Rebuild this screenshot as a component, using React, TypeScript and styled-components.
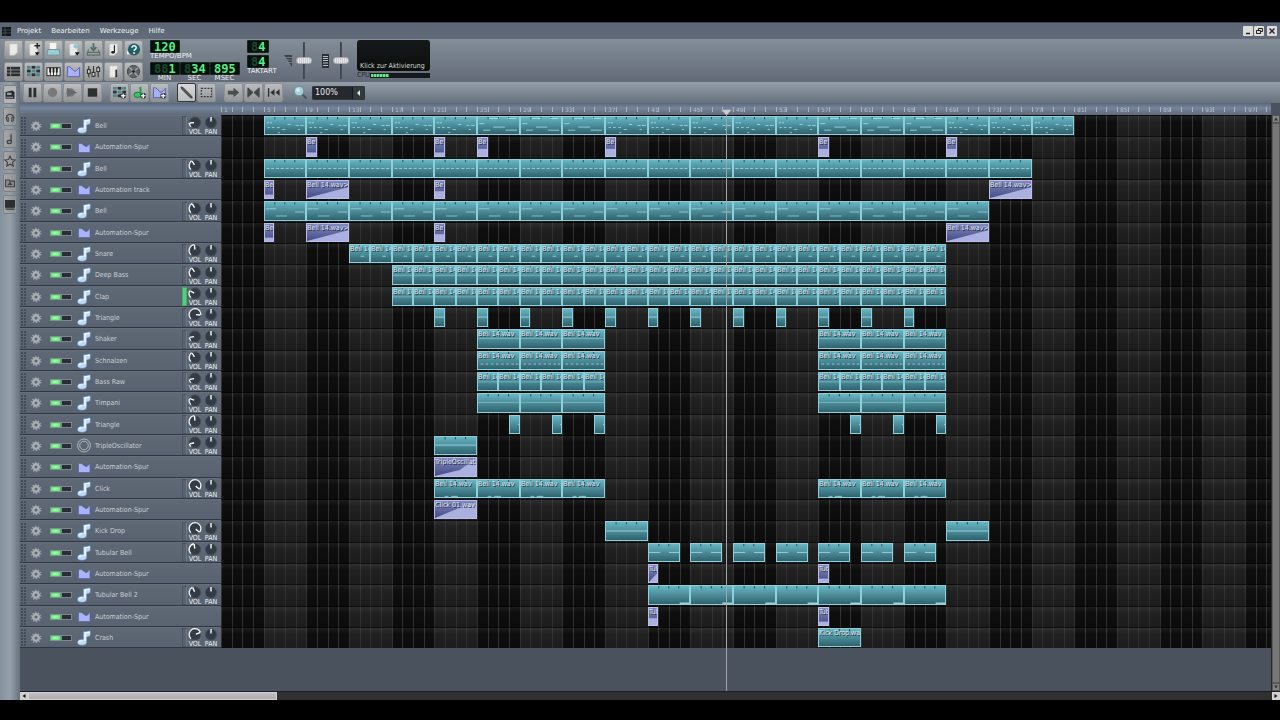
import React from "react";
import styled, { createGlobalStyle, css } from "styled-components";

const GlobalStyle = createGlobalStyle`
  * { box-sizing: border-box; }
  body {
    margin: 0;
    background: #000;
    color: #dfe4ea;
    font: 7px/8px "DejaVu Sans", "Liberation Sans", sans-serif;
  }
  button, input, select { margin: 0; padding: 0; border: 0; font: inherit; color: inherit; background: none; }
  svg { display: block; flex: none; }
`;

const condensed = css`
  font-family: "DejaVu Sans Condensed", "DejaVu Sans", "Liberation Sans", sans-serif;
`;

/* ---------- shell ---------- */

const Page = styled.div`
  min-height: 100vh;
  padding: 22px 0 20px;
  display: flex;
  flex-direction: column;
  background: #000;
`;

const Window = styled.main`
  flex: 1;
  display: flex;
  flex-direction: column;
  background: #6b7683;
`;

const MenuBar = styled.header`
  height: 17px;
  display: flex;
  align-items: center;
  padding: 0 3px 0 2px;
  border-top: 1px solid #3f4753;
  background: linear-gradient(#5c6575, #626b79);
`;

const Menu = styled.nav`
  flex: 1;
  display: flex;
  gap: 10px;
  padding-left: 6px;
`;

const MenuItem = styled.button`
  color: #eef1f4;
  line-height: 10px;
`;

const WindowButtons = styled.div`
  display: flex;
  gap: 1px;
`;

const WindowButton = styled.button<{ $apart?: boolean }>`
  width: 10px;
  height: 10px;
  margin-left: ${(p) => (p.$apart ? 2 : 0)}px;
  border-radius: 1px;
  background: #dcdcda;
`;

const TopBar = styled.section`
  height: 43px;
  display: flex;
  padding: 1px 4px 0;
  background: linear-gradient(#838e98, #626a77);
`;

const ButtonGrid = styled.div`
  display: grid;
  grid-template-columns: repeat(7, 19px);
  grid-auto-rows: 20px;
  gap: 2px 1px;
`;

const ToolButton = styled.button<{ $active?: boolean }>`
  width: 19px;
  height: 19px;
  display: grid;
  place-items: center;
  border: 1px solid ${(p) => (p.$active ? "#33363a" : "#8e9295")};
  border-radius: 2px;
  background: ${(p) => (p.$active ? "linear-gradient(#d8d8d8, #bcbcbc)" : "linear-gradient(#bcbdbe, #929495)")};
`;

const Clock = styled.div`
  display: grid;
  grid-template-columns: repeat(3, 29px);
  gap: 1px;
  align-content: start;
  margin-left: 7px;
`;

const Meter = styled.div`
  display: flex;
  flex-direction: column;
  height: 21px;
  color: #eceff2;
  line-height: 7px;
  text-align: center;
  white-space: nowrap;
`;

const TempoMeter = styled(Meter)`
  grid-column: 1 / -1;
  text-align: left;
`;

const Signature = styled.div`
  width: 28px;
  margin-left: 8px;
  display: flex;
  flex-direction: column;
  color: #eceff2;
  line-height: 7px;
`;

const LcdBox = styled.output`
  align-self: flex-start;
  height: 13px;
  padding: 0 3px;
  border: 1px solid #1c2420;
  border-radius: 1px;
  background: #04100a;
  font: bold 12px/12px "DejaVu Sans Mono", "Liberation Mono", monospace;
  color: #55f08c;
  ${Signature} &:not(:first-child) { margin-top: 2px; }
`;

const LcdGhost = styled.span`
  color: #1a4a2e;
`;

const SliderGroup = styled.label`
  display: flex;
  align-items: center;
  gap: 3px;
  height: 41px;
`;

const VerticalSlider = styled.input`
  appearance: none;
  writing-mode: vertical-lr;
  direction: rtl;
  width: 16px;
  height: 37px;
  background: linear-gradient(90deg, transparent 7px, #3c424b 7px, #4a515b 9px, transparent 9px);
  &::-webkit-slider-thumb {
    appearance: none;
    width: 16px;
    height: 7px;
    border: 1px solid #a8abae;
    border-radius: 3px;
    background: repeating-linear-gradient(90deg, #c9cacb 0 1px, #e8e8e8 1px 2px);
  }
`;

const Visual = styled.div`
  display: flex;
  flex-direction: column;
  width: 73px;
  margin-left: 8px;
`;

const Scope = styled.button`
  height: 31px;
  display: flex;
  align-items: flex-end;
  padding: 0 0 1px 3px;
  border-radius: 3px;
  background: linear-gradient(#16191a, #0a0e0c);
  color: #d6dbd8;
  white-space: nowrap;
  ${condensed}
`;

const Cpu = styled.label`
  display: flex;
  align-items: center;
  height: 8px;
  color: #23282e;
  ${condensed}
`;

const CpuBar = styled.span`
  flex: 1;
  height: 5px;
  border: 1px solid #14171a;
  background: repeating-linear-gradient(90deg, #66e888 0 2px, #2c9c50 2px 3px) 0 0 / 18px 3px no-repeat #16191c;
`;

const Body = styled.div`
  flex: 1;
  display: flex;
`;

const SideBar = styled.aside`
  width: 20px;
  flex: none;
  display: flex;
  flex-direction: column;
  gap: 3px;
  padding: 3px;
  background: linear-gradient(90deg, #84909b, #95a0aa 10px, #66717e);
`;

const SideTab = styled.button<{ $active?: boolean }>`
  height: 19px;
  display: grid;
  place-items: center;
  border: 1px solid #7c8082;
  border-radius: 2px;
  background: ${(p) => (p.$active ? "#b4b5b6" : "linear-gradient(90deg, #a6a7a8, #8f9192)")};
`;

const Editor = styled.section`
  flex: 1;
  min-width: 0;
  display: flex;
  flex-direction: column;
  background: #4a525d;
`;

const EditorBar = styled.div`
  height: 21px;
  display: flex;
  align-items: center;
  padding-left: 3px;
  gap: 8px;
  background: linear-gradient(#949ea9, #67717e);
`;

const Cluster = styled.div`
  display: flex;
  gap: 1px;
`;

const Zoom = styled.label`
  display: flex;
  align-items: center;
  gap: 4px;
  padding-left: 2px;
`;

const ZoomBox = styled.span`
  position: relative;
  display: block;
  width: 53px;
  height: 14px;
  border: 1px solid #30353b;
  border-radius: 1px;
  background: linear-gradient(90deg, #25292e 39px, #111417 39px, #111417 40px, #34393f 40px);
  & > svg { position: absolute; right: 3px; top: 3px; pointer-events: none; }
`;

const ZoomSelect = styled.select`
  appearance: none;
  width: 51px;
  height: 12px;
  padding-left: 2px;
  font: 8px/12px "DejaVu Sans", "Liberation Sans", sans-serif;
  color: #e8eaec;
`;

const Scroller = styled.div`
  flex: 1;
  display: flex;
`;

const Arrangement = styled.div`
  position: relative;
  flex: 1;
  min-width: 0;
  overflow: hidden;
`;

const RulerRow = styled.div`
  height: 12px;
  padding-left: 201px;
  background: linear-gradient(#59677d, #76859b 5px, #5f697a);
`;

const Ruler = styled.div`
  position: relative;
  height: 12px;
  overflow: hidden;
  background: linear-gradient(90deg, #a9b2bd 1px, transparent 1px 11px, #a9b2bd 11px 12px, transparent 12px 21px, #a9b2bd 21px 22px, transparent 22px) 0 4px / 32px 5px repeat-x;
`;

const BarNumber = styled.span`
  position: absolute;
  top: 3px;
  padding: 0 1px;
  font-size: 6px;
  line-height: 8px;
  color: #b4bcc7;
`;

const Playhead = styled.div`
  position: absolute;
  top: 6px;
  bottom: 0;
  width: 13px;
  &::after {
    content: "";
    position: absolute;
    left: 6px;
    top: 5px;
    bottom: 0;
    width: 1px;
    background: #a3a6a9;
  }
`;

const TrackRow = styled.div`
  display: flex;
  height: 21px;
  &:nth-child(3n + 2) { height: 22px; }
`;

const TrackHead = styled.div`
  width: 201px;
  flex: none;
  display: flex;
  align-items: center;
  padding-right: 2px;
  border-top: 1px solid #66707d;
  border-bottom: 1px solid #303742;
  background: linear-gradient(#5f6976, #586270);
`;

const Grip = styled.span`
  width: 5px;
  height: 17px;
  margin: 0 4px 0 1px;
  background: radial-gradient(circle at 1px 1px, #424b57 1px, transparent 1px) 0 0 / 3px 3px;
`;

const IconButton = styled.button`
  width: 12px;
  height: 12px;
  margin-right: 8px;
`;

const Led = styled.input`
  appearance: none;
  width: 11px;
  height: 6px;
  border: 1px solid #7d868f;
  background: #2a2d31;
  &:checked {
    background: radial-gradient(ellipse, #b0ffb4, #52d66e);
    border-color: #6f9c80;
  }
`;

const TrackName = styled.button`
  flex: 1;
  height: 17px;
  margin-left: 5px;
  display: flex;
  align-items: center;
  gap: 4px;
  text-align: left;
  color: #c9cfd6;
  white-space: nowrap;
  ${condensed}
`;

const Activity = styled.span<{ $lit?: boolean }>`
  width: 5px;
  height: 19px;
  border: 1px solid ${(p) => (p.$lit ? "#3fae63" : "#49525e")};
  border-right-color: ${(p) => (p.$lit ? "#3fae63" : "#707a86")};
  background: ${(p) => (p.$lit ? "#54cf7b" : "#5a6471")};
`;

const KnobLabel = styled.label`
  position: relative;
  width: 16px;
  display: flex;
  flex-direction: column;
  align-items: center;
  line-height: 6px;
  color: #f0f2f4;
  ${condensed}
`;

const KnobInput = styled.input`
  position: absolute;
  inset: 0 0 6px;
  width: 16px;
  height: 13px;
  opacity: 0;
`;

const Lane = styled.div`
  position: relative;
  flex: 1;
  min-width: 0;
  overflow: hidden;
  background:
    linear-gradient(rgba(0,0,0,.6) 1px, rgba(255,255,255,.06) 1px, rgba(255,255,255,0) 7px, rgba(0,0,0,.15) 20px),
    linear-gradient(90deg, #343434 1px, transparent 1px 11px, #343434 11px 12px, transparent 12px 21px, #343434 21px 22px, transparent 22px) 0 0 / 32px 100%,
    linear-gradient(90deg, #0e0e0e 43px, #212121 43px 85px, #0e0e0e 85px 128px, #212121 128px 171px, #0e0e0e 171px 213px, #212121 213px) 0 0 / 256px 100%;
`;

const ClipBox = styled.div<{ $auto?: boolean }>`
  position: absolute;
  top: 1px;
  bottom: 1px;
  overflow: hidden;
  border: 1px solid ${(p) => (p.$auto ? "#b9bfe6" : "#8ed0da")};
  background: ${(p) => (p.$auto ? "linear-gradient(#7f88c0, #434c84)" : "linear-gradient(#68b6c4, #2f626e)")};
  & > svg { position: absolute; inset: 0; width: 100%; height: 100%; }
`;

const ClipName = styled.span`
  position: relative;
  display: block;
  white-space: nowrap;
  color: #e2e8f2;
  text-shadow: 1px 1px 0 #1a2a33;
  ${condensed}
`;

const VScroll = styled.div`
  width: 9px;
  flex: none;
  margin-top: 12px;
  display: flex;
  flex-direction: column;
  border-left: 1px solid #26292d;
  background: #747474;
`;

const HScroll = styled.div`
  height: 9px;
  display: flex;
  border-top: 1px solid #1c1f23;
  background: #303030;
`;

const ScrollButton = styled.button<{ $light?: boolean }>`
  width: 8px;
  height: 8px;
  display: grid;
  place-items: center;
  border: 1px solid ${(p) => (p.$light ? "#d2d2d2" : "#555")};
  background: ${(p) => (p.$light ? "#cfcfcf" : "#858585")};
`;

const VThumb = styled.div`
  flex: 1;
  border: 1px solid #5b5b5b;
  background: #777;
`;

const HTrack = styled.div`
  flex: 1;
`;

const HThumb = styled.div`
  width: 20%;
  height: 8px;
  border: 1px solid #d2d0d2;
  background: linear-gradient(#c2c0c2, #aeacae);
`;

/* ---------- icons ---------- */

const Svg = ({ size = 15, children }: { size?: number; children: React.ReactNode }) => (
  <svg width={size} height={size} viewBox="0 0 16 16" fill="none" aria-hidden="true">{children}</svg>
);

const sheet = <path d="M4 2h8v9l-3 3H4z" fill="#ebebe9" stroke="#c9c9c6" strokeWidth=".6" />;
const down = <path d="M9.5 11h5L12 14.5z" fill="#111" />;
const blocks = (
  <g>
    {[1, 6, 11].map((x) => [2, 6, 10].map((y, i) => (
      <rect key={`${x}-${y}`} x={x} y={y} width="4" height="3" fill={(x + i) % 2 ? "#4b878d" : "#2b3236"} />
    )))}
  </g>
);
const plus = <path d="M12 8.5v6M9 11.5h6" stroke="#20262a" strokeWidth="3.4" />;
const plusTop = <path d="M12 9v5M9.5 11.5h5" stroke="#e8ece9" strokeWidth="1.6" />;
const curve = <path d="M1.5 3H4l5 4.5h1.5l4-4v10h-13z" fill="#a9b1f6" stroke="#5660b0" strokeWidth="1" />;

const mainIcons: [string, React.ReactNode][] = [
  ["Neu", sheet],
  ["Neu aus Vorlage", <>{sheet}<path d="M12 1v6M9 4h6" stroke="#222" strokeWidth="1.5" />{down}</>],
  ["Öffnen", <><path d="M4 1h7v7H4z" fill="#f4f4f2" /><path d="M2 8h12l1 6H1z" fill="#9ccbd2" stroke="#5a8f98" strokeWidth=".8" /></>],
  ["Zuletzt geöffnet", <>{sheet}<circle cx="10.5" cy="4.5" r="2.5" fill="#8cc9d4" />{down}</>],
  ["Speichern", <><path d="M8 1v6M5 5.5L8 9l3-3.5" stroke="#4c6c66" strokeWidth="1.8" /><path d="M3 8l-1.5 3v3h13v-3L13 8M2 11h12" stroke="#5d6e6a" strokeWidth="1.2" /></>],
  ["Exportieren", <>{sheet}<path d="M9 3.5V11" stroke="#222" strokeWidth="1.2" /><ellipse cx="7.5" cy="11" rx="2" ry="1.5" fill="#222" /></>],
  ["Hilfe anzeigen", <><circle cx="8.5" cy="8" r="6.5" fill="#1f6068" /><path d="M6.3 6.2c0-3 4.700-2.800 4.600-.1 0 1.700-2.300 1.700-2.300 3.500M8.600 11v1.700" stroke="#f1f5f5" strokeWidth="1.7" /><path d="M1 9l3 4H1z" fill="#fff" /></>],
  ["Song-Editor", <g><rect x="1" y="3" width="14" height="10" fill="#2a2c2e" /><path d="M1 6.300h14M1 9.700h14M5 3v10" stroke="#8b8e90" /></g>],
  ["Beat+Bassline-Editor", blocks],
  ["Piano-Roll", <g><rect x="1" y="4" width="14" height="8.5" fill="#f1f1ef" stroke="#222" /><path d="M4.500 4v8.500M8 4v8.500M11.500 4v8.500" stroke="#222" strokeWidth="1" /><path d="M4.500 4v5M8 4v5M11.500 4v5" stroke="#222" strokeWidth="2" /></g>],
  ["Automation-Editor", curve],
  ["FX-Mixer", <g stroke="#333" strokeWidth="1.2"><path d="M3 2v12M8 2v12M13 2v12" /><rect x="1.5" y="6" width="3" height="4" fill="#ddd" /><rect x="6.5" y="9" width="3" height="4" fill="#ddd" /><rect x="11.5" y="4" width="3" height="4" fill="#ddd" /></g>],
  ["Projektnotizen", <>{sheet}<path d="M11 6v8" stroke="#333" strokeWidth="2" /></>],
  ["Controller-Rack", <><circle cx="8" cy="8" r="6.5" fill="#606669" stroke="#3a3e40" /><path d="M8 8L3.500 3.500M8 8l5-4M8 8l4.500 5M8 8l-5 4" stroke="#a4a8aa" strokeWidth="1.3" /><circle cx="8" cy="8" r="1.5" fill="#222" /></>],
];

const sideIcons: [string, React.ReactNode][] = [
  ["Instrumente", <><path d="M2 4l9-2 3 2v9H2z" fill="#252c2e" /><path d="M4 5h6v3H4z" fill="#8fa09b" /><path d="M3 11h9" stroke="#c7cdcb" /></>],
  ["Samples", <><path d="M4 12C-1 2 17 2 12 12" stroke="#3f4346" strokeWidth="1.8" /><path d="M3 8.500h3V14H4zM13 8.500h-3V14h2z" fill="#77797b" stroke="#3f4346" /></>],
  ["Presets", <><path d="M9.500 1.500V12" stroke="#3f4346" strokeWidth="1.8" /><ellipse cx="7" cy="12" rx="3" ry="2.2" fill="#8b8d8f" stroke="#3f4346" strokeWidth="1.4" /></>],
  ["Favoriten", <path d="M8 1.500l2 4.500 5 .5-3.700 3.300 1.100 5L8 12.200l-4.400 2.600 1.100-5L1 6.500 6 6z" stroke="#3f4346" strokeWidth="1.5" />],
  ["Eigene Dateien", <path d="M2 4h5l1 1.500h6V13H2zM6 10l2-2.500 2 2.500z" fill="#8a8d8f" stroke="#3a3e41" strokeWidth="1.4" />],
  ["Computer", <><rect x="2" y="2" width="12" height="9" fill="#2b3033" stroke="#1a1e20" /><path d="M2 12.500h12v2H2z" fill="#44494b" /></>],
];

const EighthNote = () => (
  <svg width="14" height="16" viewBox="0 0 14 15" aria-hidden="true">
    <path d="M6.300 1.300L13.500.3v4.200l-1.300 1.500-2.400.4v5c0 2.200-2 3.400-4.900 3.400-3 0-4.700-1.200-4.600-3.100.2-2.100 2.600-3.400 6-2.900z" fill="#bcdaf8" stroke="#4f76a4" strokeWidth=".5" />
    <path d="M8 2v8.500M8 2.400l4.700-.7M2 11.500c.6-1 2-1.400 3.500-1.400" fill="none" stroke="#f6fbff" strokeWidth="1.3" />
  </svg>
);
const Envelope = () => (
  <svg width="14" height="13" viewBox="0 0 14 13" aria-hidden="true">
    <path d="M1.500 2.500h3l4 3H10l3-3v9H1.500z" fill="#a9b3f8" stroke="#59639e" strokeWidth=".7" />
  </svg>
);
const Oscillator = () => (
  <svg width="14" height="15" viewBox="0 0 14 15" fill="none" stroke="#c3cad1" aria-hidden="true">
    <circle cx="7" cy="7.5" r="6.5" strokeWidth=".8" /><circle cx="7" cy="7.5" r="4.3" strokeWidth=".8" />
  </svg>
);
const Gear = () => (
  <svg width="12" height="12" viewBox="0 0 13 13" fill="none" aria-hidden="true">
    <circle cx="6.5" cy="6.5" r="5" stroke="#9aa1a8" strokeWidth="1.5" strokeDasharray="1.5 1.64" />
    <circle cx="6.5" cy="6.5" r="3" stroke="#a9afb4" strokeWidth="2.6" />
  </svg>
);

const polar = (r: number, deg: number) => {
  const a = ((deg - 90) * Math.PI) / 180;
  return `${(8 + r * Math.cos(a)).toFixed(2)} ${(7 + r * Math.sin(a)).toFixed(2)}`;
};

const Knob = ({ label, angle, arc }: { label: string; angle: number; arc?: boolean }) => (
  <KnobLabel>
    <svg width="16" height="13" viewBox="0 0 16 14" fill="none" aria-hidden="true">
      <circle cx="8" cy="7" r="6" fill="#353b44" stroke="#464e59" />
      {arc && <path d={`M${polar(6.3, -135)}A6.3 6.3 0 ${angle > 45 ? 1 : 0} 1 ${polar(6.3, angle)}`} stroke="#f1f3f5" strokeWidth="1.4" />}
      <path d={`M${polar(1, angle)}L${polar(5.8, angle)}`} stroke="#fff" strokeWidth="1.5" />
    </svg>
    <KnobInput type="range" min={-135} max={135} defaultValue={angle} />
    {label}
  </KnobLabel>
);

/* ---------- song data ---------- */

type Pattern = "melody" | "melodyLong" | "dashes" | "shuffle" | "steps" | "line" | "soft" | "hit" | "low" | "drone" | "tubes" | "tail" | "tick" | "end" | "none";
type Shape = "flat" | "half" | "ramp" | "bend" | "steep" | "corner";
type Clip = { at: number; len: number; name?: string; pattern?: Pattern; shape?: Shape };
type Track = { name: string; kind: "note" | "auto" | "osc"; vol?: number; lit?: boolean; clips: Clip[] };

const run = (from: number, to: number, step: number, extra: Partial<Clip> = {}): Clip[] => {
  const out: Clip[] = [];
  for (let at = from; at < to; at += step) out.push({ at, len: step, ...extra });
  return out;
};
const spots = (at: number[], extra: Partial<Clip> = {}): Clip[] => at.map((a) => ({ at: a, len: 1, ...extra }));

const isLong = (at: number) => (at >= 24 && at < 36) || (at >= 56 && at < 68);
const wav = "Bell 14.wav";
/* clip titles shortened for blocks of one and two bars */
const wav1 = "Be";
const wav2 = "Bell 14";

const tracks: Track[] = [
  { name: "Bell", kind: "note", vol: -95, clips: run(4, 80, 4).map((c) => ({ ...c, pattern: isLong(c.at) ? "melodyLong" : "melody" })) },
  { name: "Automation-Spur", kind: "auto", clips: [...spots([8, 20], { name: wav1, shape: "flat" }), ...spots([24, 36, 56, 68], { name: wav1, shape: "half" })] },
  { name: "Bell", kind: "note", vol: -35, clips: run(4, 76, 4, { pattern: "dashes" }) },
  { name: "Automation track", kind: "auto", clips: [{ at: 4, len: 1, name: wav1, shape: "flat" }, { at: 8, len: 4, name: `${wav}>`, shape: "ramp" }, { at: 20, len: 1, name: wav1, shape: "half" }, { at: 72, len: 4, name: `${wav}>`, shape: "ramp" }] },
  { name: "Bell", kind: "note", vol: -30, clips: run(4, 72, 4, { pattern: "steps" }) },
  { name: "Automation-Spur", kind: "auto", clips: [{ at: 4, len: 1, name: wav1, shape: "flat" }, { at: 8, len: 4, name: `${wav}>`, shape: "ramp" }, { at: 20, len: 1, name: wav1, shape: "half" }, { at: 68, len: 4, name: `${wav}>`, shape: "ramp" }] },
  { name: "Snare", kind: "note", vol: -5, clips: run(12, 68, 2, { name: wav2, pattern: "hit" }) },
  { name: "Deep Bass", kind: "note", vol: -35, clips: run(16, 68, 2, { name: wav2, pattern: "low" }) },
  { name: "Clap", kind: "note", vol: -60, lit: true, clips: run(16, 68, 2, { name: wav2, pattern: "low" }) },
  { name: "Triangle", kind: "note", vol: 95, clips: spots([20, 24, 28, 32, 36, 40, 44, 48, 52, 56, 60, 64], { pattern: "line" }) },
  { name: "Shaker", kind: "note", vol: -100, clips: [...run(24, 36, 4, { name: wav, pattern: "soft" }), ...run(56, 68, 4, { name: wav, pattern: "soft" })] },
  { name: "Schnalzen", kind: "note", vol: -35, clips: [...run(24, 36, 4, { name: wav, pattern: "shuffle" }), ...run(56, 68, 4, { name: wav, pattern: "shuffle" })] },
  { name: "Bass Raw", kind: "note", vol: -100, clips: [...run(24, 36, 2, { name: wav2, pattern: "low" }), ...run(56, 68, 2, { name: wav2, pattern: "low" })] },
  { name: "Timpani", kind: "note", vol: -70, clips: [...run(24, 36, 4, { pattern: "soft" }), ...run(56, 68, 4, { pattern: "soft" })] },
  { name: "Triangle", kind: "note", vol: -5, clips: spots([27, 31, 35, 59, 63, 67], { pattern: "tick" }) },
  { name: "TripleOscillator", kind: "osc", vol: -105, clips: [{ at: 20, len: 4, pattern: "line" }] },
  { name: "Automation-Spur", kind: "auto", clips: [{ at: 20, len: 4, name: "TripleOscillat", shape: "bend" }] },
  { name: "Click", kind: "note", vol: 130, clips: [...run(20, 36, 4, { name: wav, pattern: "tail" }), ...run(56, 68, 4, { name: wav, pattern: "tail" })] },
  { name: "Automation-Spur", kind: "auto", clips: [{ at: 20, len: 4, name: "Click 01.wav", shape: "steep" }] },
  { name: "Kick Drop", kind: "note", vol: 130, clips: [{ at: 36, len: 4, pattern: "drone" }, { at: 68, len: 4, pattern: "drone" }] },
  { name: "Tubular Bell", kind: "note", vol: -10, clips: run(40, 68, 4, { pattern: "tubes" }).map((c) => ({ ...c, len: 3 })) },
  { name: "Automation-Spur", kind: "auto", clips: [{ at: 40, len: 1, name: "Tub", shape: "corner" }, { at: 56, len: 1, name: "Tub", shape: "flat" }] },
  { name: "Tubular Bell 2", kind: "note", vol: -25, clips: run(40, 68, 4, { pattern: "end" }) },
  { name: "Automation-Spur", kind: "auto", clips: [{ at: 40, len: 1, name: "Tub", shape: "half" }, { at: 56, len: 1, name: "Tub", shape: "flat" }] },
  { name: "Crash", kind: "note", vol: 70, clips: [{ at: 56, len: 4, name: "Kick Drop.wa", pattern: "none" }] },
];

/* note strokes as [x, y, width], in a field of 32 units per bar by 60 */
const strokes: Record<Pattern, [number, number, number][]> = {
  melody: [[5, 19, 7], [15, 19, 7], [8, 36, 8], [22, 36, 8], [38, 36, 9], [55, 43, 10], [72, 25, 10], [98, 28, 10], [112, 28, 12], [105, 43, 7], [41, 54, 7]],
  melodyLong: [[34, 4, 30], [92, 4, 26], [4, 22, 16], [48, 34, 36], [16, 45, 22], [86, 45, 36]],
  dashes: [4, 19, 35, 50, 66, 82, 98, 113].map((x) => [x, 28, 10]),
  shuffle: [8, 24, 40, 56, 72, 88, 104, 118].map((x) => [x, 41, 8]),
  steps: [[2, 20, 34], [96, 31, 30], [34, 44, 36]],
  line: [[0, 27, 128]],
  soft: [[0, 27, 128]],
  hit: [[36, 38, 12]],
  low: [[0, 30, 64]],
  drone: [[0, 27, 128]],
  tubes: [[0, 28, 36], [64, 28, 32]],
  tail: [[30, 56, 12], [50, 56, 12], [60, 56, 12]],
  tick: [[28, 28, 4]],
  end: [[98, 55, 30]],
  none: [],
};
const thick: Partial<Record<Pattern, number>> = { steps: 5, drone: 6, end: 5 };
const faint: Pattern[] = ["steps", "soft", "low", "drone"];

const shapes: Record<Shape, string> = {
  flat: "0,48 100,48 100,60 0,60",
  half: "0,36 100,36 100,60 0,60",
  ramp: "0,60 100,22 100,60",
  bend: "0,60 60,40 100,2 100,60",
  steep: "0,60 80,12 100,8 100,60",
  corner: "0,60 100,30 100,60",
};

const barX = (bar: number) => Math.round((bar * 32) / 3);

const ClipView = ({ clip, auto }: { clip: Clip; auto: boolean }) => {
  const units = clip.len * 32;
  const p = clip.pattern ?? "none";
  return (
    <ClipBox $auto={auto} style={{ left: barX(clip.at), width: barX(clip.at + clip.len) - barX(clip.at) }}>
      {auto ? (
        <svg viewBox="0 0 100 60" preserveAspectRatio="none" aria-hidden="true">
          <polygon points={shapes[clip.shape ?? "flat"]} fill="#aab0e0" />
        </svg>
      ) : (
        <svg viewBox={`0 0 ${units} 60`} preserveAspectRatio="none" aria-hidden="true">
          {Array.from({ length: clip.len - 1 }, (_, i) => (
            <rect key={i} x={(i + 1) * 32 - 2} y="0" width="3" height="8" fill="#24505b" />
          ))}
          {strokes[p].map(([x, y, w], i) => (
            <rect key={i} x={x} y={y} width={w} height={thick[p] ?? 3} fill="#b5edf4" opacity={faint.includes(p) ? 0.4 : 0.8} />
          ))}
        </svg>
      )}
      {clip.name && <ClipName>{clip.name}</ClipName>}
    </ClipBox>
  );
};

const Lcd = ({ value, cells = 3 }: { value: string; cells?: number }) => (
  <LcdBox>
    {cells > value.length && <LcdGhost aria-hidden="true">{"8".repeat(cells - value.length)}</LcdGhost>}
    {value}
  </LcdBox>
);

const Tool = ({ name, active, children }: { name: string; active?: boolean; children: React.ReactNode }) => (
  <ToolButton aria-label={name} $active={active}><Svg>{children}</Svg></ToolButton>
);

export default function App() {
  return (
    <Page>
      <GlobalStyle />
      <Window>
        <MenuBar>
          <svg width="9" height="9" viewBox="0 0 9 9" aria-hidden="true">
            <path d="M0 0h9v9H0z" fill="#15181b" /><path d="M0 3h9M0 6h9M3 0v9" stroke="#4f565f" strokeWidth=".7" />
          </svg>
          <Menu>
            {["Projekt", "Bearbeiten", "Werkzeuge", "Hilfe"].map((m) => <MenuItem key={m}>{m}</MenuItem>)}
          </Menu>
          <WindowButtons>
            <WindowButton aria-label="Minimieren"><svg width="10" height="10"><path d="M3 7.500h4" stroke="#222" strokeWidth="1.5" /></svg></WindowButton>
            <WindowButton aria-label="Wiederherstellen"><svg width="10" height="10" fill="none" stroke="#222"><path d="M4.500 4V2.500h4v3H7M2.500 4.500h4v3h-4z" /></svg></WindowButton>
            <WindowButton aria-label="Schließen" $apart><svg width="10" height="10"><path d="M2.500 2.500l5 5M7.500 2.500l-5 5" stroke="#222" strokeWidth="1.3" /></svg></WindowButton>
          </WindowButtons>
        </MenuBar>

        <TopBar>
          <ButtonGrid>
            {mainIcons.map(([name, icon]) => <Tool key={name} name={name}>{icon}</Tool>)}
          </ButtonGrid>
          <Clock>
            <TempoMeter><Lcd value="120" />TEMPO/BPM</TempoMeter>
            <Meter><Lcd value="1" />MIN</Meter>
            <Meter><Lcd value="34" />SEC</Meter>
            <Meter><Lcd value="895" />MSEC</Meter>
          </Clock>
          <Signature>
            <Lcd value="4" cells={2} />
            <Lcd value="4" cells={2} />
            TAKTART
          </Signature>
          <SliderGroup>
            <svg width="18" height="14" viewBox="0 0 18 14" aria-hidden="true"><path d="M9 1h8v12z" fill="#3b424b" /><path d="M9 3.500h8M10 6h7M12 8.500h5" stroke="#7d8792" strokeWidth=".8" /></svg>
            <VerticalSlider type="range" aria-label="Lautstärke" defaultValue={50} />
          </SliderGroup>
          <SliderGroup>
            <svg width="18" height="14" viewBox="0 0 18 14" aria-hidden="true"><path d="M10 0h7v14h-7z" fill="#2b3036" /><path d="M11 2.500h5M11 4.500h5M11 6.500h5M11 9h5M11 11.500h5" stroke="#c8cdd2" strokeWidth=".9" /></svg>
            <VerticalSlider type="range" aria-label="Tonhöhe" defaultValue={50} />
          </SliderGroup>
          <Visual>
            <Scope>Klick zur Aktivierung</Scope>
            <Cpu>CPU<CpuBar /></Cpu>
          </Visual>
        </TopBar>

        <Body>
          <SideBar>
            {sideIcons.map(([name, icon], i) => (
              <SideTab key={name} aria-label={name} $active={i === 0}><Svg size={12}>{icon}</Svg></SideTab>
            ))}
          </SideBar>

          <Editor>
            <EditorBar>
              <Cluster>
                <Tool name="Pause"><path d="M4 3h3v10H4zM9 3h3v10H9z" fill="#2b2e31" /></Tool>
                <Tool name="Aufnehmen"><circle cx="8" cy="8" r="5" fill="#77797c" /></Tool>
                <Tool name="Aufnehmen und abspielen"><circle cx="6" cy="8" r="4.5" fill="#77797c" /><path d="M2 3l5 2.500L13.500 8 7 10.500 2 13z" fill="#666a6e" /></Tool>
                <Tool name="Stopp"><path d="M3 3.500h10v9H3z" fill="#2e3134" /></Tool>
              </Cluster>
              <Cluster>
                <Tool name="Beat+Bassline hinzufügen">{blocks}{plus}{plusTop}</Tool>
                <Tool name="Sample-Spur hinzufügen"><path d="M9 2v8" stroke="#1d9c46" strokeWidth="2" /><ellipse cx="6" cy="10.5" rx="4" ry="2.8" fill="#3bc465" stroke="#15793a" />{plus}{plusTop}</Tool>
                <Tool name="Automation-Spur hinzufügen">{curve}{plus}{plusTop}</Tool>
              </Cluster>
              <Cluster>
                <Tool name="Zeichenmodus" active><path d="M2 2l2.500.8L13.500 12l.5 2-2-.5L3 4.500z" fill="#55595c" stroke="#2c2f31" strokeWidth=".8" /></Tool>
                <Tool name="Auswahlmodus"><path d="M2.500 3.500h11v9h-11z" stroke="#333639" strokeWidth="1.3" strokeDasharray="2 1.3" /></Tool>
              </Cluster>
              <Cluster>
                <Tool name="Automatisch scrollen"><path d="M2 6h6V3l6 5-6 5v-3H2z" fill="#4a4e51" /></Tool>
                <Tool name="Schleifenpunkte"><path d="M2 3l5.500 5L2 13zM14 3L8.500 8l5.500 5z" fill="#43474a" stroke="#43474a" /></Tool>
                <Tool name="Zurück zum Anfang"><path d="M2 3.500h1.500v9H2zM9 4.500v7L4.500 8zM14.500 4.500v7L10 8z" fill="#2c3033" /></Tool>
              </Cluster>
              <Zoom>
                <svg width="15" height="15" viewBox="0 0 15 15" aria-hidden="true">
                  <path d="M9 9l4.500 4.500" stroke="#4a525b" strokeWidth="2" /><circle cx="6" cy="6" r="4.8" fill="#a8ced6" stroke="#6f8d97" /><circle cx="5" cy="5" r="2" fill="#d4ecf0" />
                </svg>
                <ZoomBox>
                  <ZoomSelect aria-label="Zoom" defaultValue="100%"><option>100%</option><option>200%</option></ZoomSelect>
                  <svg width="5" height="6" viewBox="0 0 5 6"><path d="M4 0v6L1 3z" fill="#e2e4e6" /></svg>
                </ZoomBox>
              </Zoom>
            </EditorBar>

            <Scroller>
              <Arrangement>
                <RulerRow>
                  <Ruler>
                    {Array.from({ length: 25 }, (_, i) => (
                      <BarNumber key={i} style={{ left: barX(i * 4) + 2 }}>{i * 4 + 1}</BarNumber>
                    ))}
                  </Ruler>
                </RulerRow>
                <div>
                  {tracks.map((t, i) => (
                    <TrackRow key={i}>
                      <TrackHead>
                        <Grip />
                        <IconButton aria-label={`${t.name}: Aktionen`}><Gear /></IconButton>
                        <Led type="checkbox" aria-label={`${t.name} aktiv`} defaultChecked />
                        <Led type="checkbox" aria-label={`${t.name} solo`} />
                        <TrackName>
                          {t.kind === "note" ? <EighthNote /> : t.kind === "auto" ? <Envelope /> : <Oscillator />}
                          {t.name}
                        </TrackName>
                        {t.vol !== undefined && (
                          <>
                            <Activity $lit={t.lit} />
                            <Knob label="VOL" angle={t.vol} arc />
                            <Knob label="PAN" angle={0} />
                          </>
                        )}
                      </TrackHead>
                      <Lane>
                        {t.clips.map((c, j) => <ClipView key={j} clip={c} auto={t.kind === "auto"} />)}
                      </Lane>
                    </TrackRow>
                  ))}
                </div>
                <Playhead style={{ left: 201 + 499 }}>
                  <svg width="13" height="7" viewBox="0 0 13 7" aria-hidden="true"><path d="M1 .5h11L6.500 6.500z" fill="#c9ced4" stroke="#7c8592" strokeWidth=".6" /></svg>
                </Playhead>
              </Arrangement>
              <VScroll>
                <ScrollButton aria-label="Nach oben"><svg width="4" height="4"><path d="M0 3.500h4L2 .5z" fill="#333" /></svg></ScrollButton>
                <VThumb />
                <ScrollButton aria-label="Nach unten"><svg width="4" height="4"><path d="M0 .5h4L2 3.500z" fill="#333" /></svg></ScrollButton>
              </VScroll>
            </Scroller>
            <HScroll>
              <ScrollButton $light aria-label="Nach links"><svg width="4" height="4"><path d="M3.500 0v4L.5 2z" fill="#111" /></svg></ScrollButton>
              <HTrack><HThumb /></HTrack>
              <ScrollButton $light aria-label="Nach rechts"><svg width="4" height="4"><path d="M.5 0v4l3-2z" fill="#111" /></svg></ScrollButton>
            </HScroll>
          </Editor>
        </Body>
      </Window>
    </Page>
  );
}
